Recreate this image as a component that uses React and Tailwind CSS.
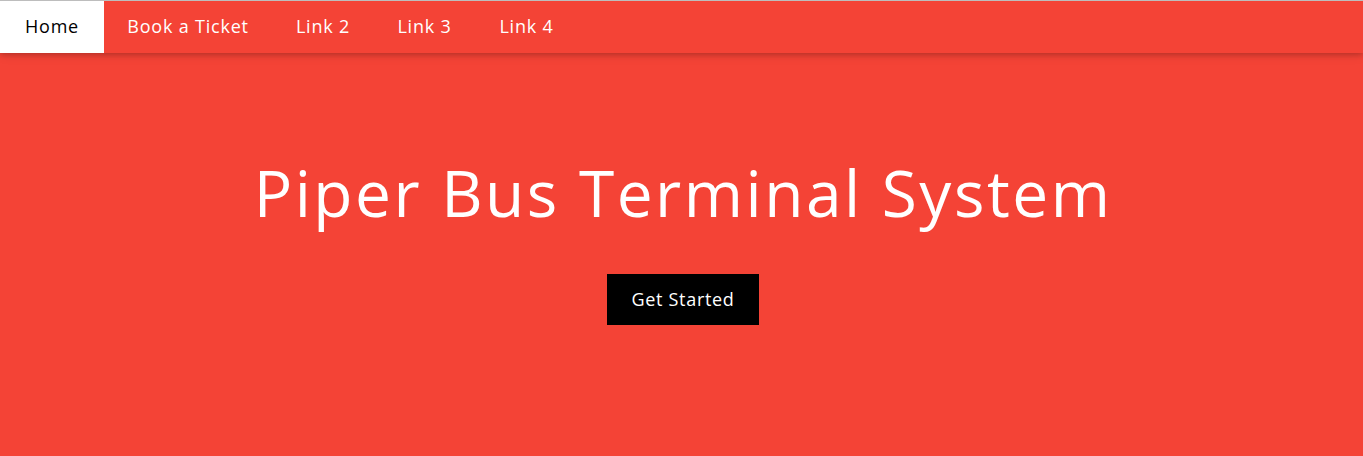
import React from 'react';

const links = [
  { label: 'Home', width: 'w-[104px]', active: true },
  { label: 'Book a Ticket', width: 'w-[168px]' },
  { label: 'Link 2', width: 'w-[102px]' },
  { label: 'Link 3', width: 'w-[101px]' },
  { label: 'Link 4', width: 'w-[103px]' },
];

export default function App() {
  return (
    <div
      className="w-[1363px] h-[456px] overflow-hidden bg-[#f44336] border-t border-[#bdbdbd]"
      style={{ fontFamily: '"Open Sans", "Liberation Sans", sans-serif' }}
    >
      <nav className="relative z-10 flex h-[52px] bg-[#f44336] shadow-[0_2px_5px_0_rgba(0,0,0,0.16),0_2px_10px_0_rgba(0,0,0,0.12)]">
        {links.map((l) => (
          <a
            key={l.label}
            href="#"
            className={`${l.width} flex items-center justify-center pb-[2px] text-[18px] tracking-[0.8px] ${
              l.active ? 'bg-white text-black' : 'text-white'
            }`}
          >
            {l.label}
          </a>
        ))}
      </nav>

      <header className="flex flex-col items-center pt-[92px] text-white">
        <h1 className="pl-[3px] text-[64px] leading-[96px] font-normal tracking-[2.5px]">
          Piper Bus Terminal System
        </h1>
        <button className="mt-[33px] ml-[3px] w-[152px] h-[51px] bg-black text-white text-[18px] tracking-[0.7px]">
          Get Started
        </button>
      </header>
    </div>
  );
}
